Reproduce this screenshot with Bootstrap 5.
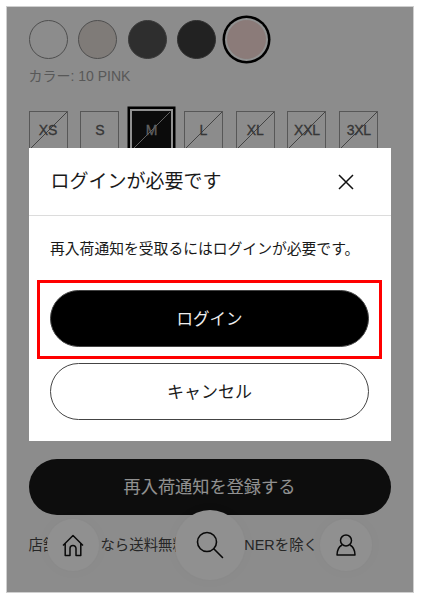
<!DOCTYPE html>
<html lang="ja">
	<head>
		<meta charset="UTF-8" />
		<meta name="viewport" content="width=device-width, initial-scale=1.0" />
		<title>ログインが必要です</title>
		<link
			href="https://cdn.jsdelivr.net/npm/bootstrap@5.3.3/dist/css/bootstrap.min.css"
			rel="stylesheet"
		/>
		<style>
			body {
				background: #fff;
				font-family: "Liberation Sans", "Noto Sans CJK JP", sans-serif;
				overflow: hidden;
			}
			.phone-frame {
				position: relative;
				width: 408px;
				height: 587px;
				margin: 6px 0 0 6px;
				padding: 13px 21.5px 0;
				border: 1px solid #cfcfcf;
				background: #f6f6f6;
				overflow: hidden;
			}
			.swatch-row {
				gap: 10.6px;
			}
			.swatch {
				width: 39px;
				height: 39px;
				flex: none;
				border-radius: 50%;
				border: 1px solid #8a8a8a;
			}
			.swatch-white { background: #f6f6f6; }
			.swatch-beige { background: #e0d8d3; }
			.swatch-gray { background: #525252; border-color: #666; }
			.swatch-dark { background: #3c3c3c; border-color: #555; }
			.swatch-pink {
				background: #f4d9d5;
				border-color: #f4d9d5;
				box-shadow: 0 0 0 2px #fff, 0 0 0 4.5px #000;
			}
			.color-label {
				margin-top: 7px;
				font-size: 14px;
				line-height: 20px;
				color: #9c9c9c;
			}
			.size-row {
				gap: 12.8px;
				margin-top: 25px;
			}
			.size-box {
				width: 39px;
				height: 39px;
				flex: none;
				border: 1px solid #999;
				font-size: 14px;
				line-height: 37px;
				letter-spacing: -0.2px;
				text-align: center;
				color: #606060;
				-webkit-text-stroke: 0.3px #606060;
			}
			.size-out {
				background: linear-gradient(
					to top left,
					transparent calc(50% - 0.7px),
					#777 50%,
					transparent calc(50% + 0.7px)
				);
			}
			.size-active {
				background: linear-gradient(
						to top left,
						transparent calc(50% - 0.7px),
						#aaa 50%,
						transparent calc(50% + 0.7px)
					),
					#151515;
				color: #aaa;
				-webkit-text-stroke: 0.3px #aaa;
				border-color: #151515;
				box-shadow: 0 0 0 2px #fff, 0 0 0 4.5px #000;
			}
			.notify-btn {
				width: 362px;
				height: 56px;
				margin-top: 309px;
				padding: 2px 0 0;
				background: #171717;
				color: #fff;
				font-size: 17.2px;
				border: 0;
			}
			.ship-note {
				margin-top: 20px;
				font-size: 14.4px;
				line-height: 20px;
				color: #444;
				white-space: nowrap;
			}
			.float-nav {
				position: absolute;
				left: 0;
				right: 0;
				top: 503px;
				height: 70px;
			}
			.nav-dot {
				position: absolute;
				border: 0;
				padding: 0;
				border-radius: 50%;
				background: #fdfdfd;
				box-shadow: 0 0 14px rgba(0, 0, 0, 0.03);
			}
			.nav-home { left: 40px; top: 9px; width: 52px; height: 52px; }
			.nav-search { left: 168px; top: 0; width: 70px; height: 70px; }
			.nav-user { left: 313px; top: 9px; width: 52px; height: 52px; }
			.dim-layer {
				position: absolute;
				inset: 0;
				background: rgba(0, 0, 0, 0.43);
			}
			.dialog-box {
				position: absolute;
				left: 21.5px;
				top: 141px;
				width: 362px;
				height: 293px;
				border: 0;
				border-radius: 0;
				background: #fff;
				color: #1a1a1a;
			}
			.dialog-head {
				height: 68px;
				padding: 0 37px 0 22px;
				border-bottom: 1px solid #dcdcdc;
			}
			.dialog-title {
				font-size: 19px;
				font-weight: 400;
				line-height: 1;
			}
			.close-x {
				border: 0;
				padding: 0;
				background: none;
				width: 16px;
				height: 16px;
				display: flex;
			}
			.dialog-main {
				padding: 23px 21.5px 0;
			}
			.dialog-text {
				font-size: 14.8px;
				line-height: 20px;
				margin: 0 0 31px;
				white-space: nowrap;
			}
			.login-wrap {
				position: relative;
				margin-bottom: 16px;
			}
			.red-mark {
				position: absolute;
				top: -10px;
				bottom: -12px;
				left: -13px;
				right: -13px;
				border: 3px solid #f00;
				pointer-events: none;
			}
			.pill-btn {
				display: block;
				width: 100%;
				height: 57px;
				padding: 2px 0 0;
				font-size: 16.5px;
				border: 1px solid #444;
			}
			.pill-login {
				background: #000;
				color: #eee;
			}
			.pill-cancel {
				background: #fff;
				color: #1a1a1a;
				font-size: 17px;
			}
		</style>
	</head>
	<body>
		<div class="phone-frame">
			<div class="d-flex swatch-row">
				<div class="swatch swatch-white"></div>
				<div class="swatch swatch-beige"></div>
				<div class="swatch swatch-gray"></div>
				<div class="swatch swatch-dark"></div>
				<div class="swatch swatch-pink"></div>
			</div>
			<div class="color-label">カラー: 10 PINK</div>

			<div class="d-flex size-row">
				<div class="size-box size-out">XS</div>
				<div class="size-box">S</div>
				<div class="size-box size-active">M</div>
				<div class="size-box size-out">L</div>
				<div class="size-box size-out">XL</div>
				<div class="size-box size-out">XXL</div>
				<div class="size-box size-out">3XL</div>
			</div>

			<button class="btn rounded-pill d-block notify-btn">再入荷通知を登録する</button>
			<div class="ship-note">店舗受取りなら送料無料（一部INNERを除く</div>

			<!-- floating nav -->
			<div class="float-nav">
				<button class="nav-dot nav-home d-flex align-items-center justify-content-center">
					<svg width="22" height="23" viewBox="0 0 22 23" fill="none" stroke="#111" stroke-width="1.5" stroke-linejoin="round">
						<path d="M1 11.5 11 1.5 21 11.5M3.2 9.5V21.5H8V14.5A3 3 0 0 1 14 14.5V21.5H18.8V9.5" />
					</svg>
				</button>
				<button class="nav-dot nav-search d-flex align-items-center justify-content-center">
					<svg width="28" height="28" viewBox="0 0 28 28" fill="none" stroke="#111" stroke-width="1.6" stroke-linecap="round">
						<circle cx="11" cy="11" r="9.5" />
						<path d="M18 18 26.5 26.5" />
					</svg>
				</button>
				<button class="nav-dot nav-user d-flex align-items-center justify-content-center">
					<svg width="20" height="22" viewBox="0 0 20 22" fill="none" stroke="#111" stroke-width="1.5" stroke-linejoin="round">
						<ellipse cx="10" cy="6.5" rx="5.5" ry="5.5" />
						<path d="M6 11C2.5 13 1 16 1 21H19C19 16 17.5 13 14 11" />
					</svg>
				</button>
			</div>

			<div class="dim-layer"></div>

			<!-- Dialog -->
			<div class="modal-content dialog-box">
				<div class="d-flex align-items-center justify-content-between dialog-head">
					<h5 class="m-0 dialog-title">ログインが必要です</h5>
					<button class="close-x" aria-label="閉じる">
						<svg width="16" height="16" viewBox="0 0 16 16" fill="none" stroke="#111" stroke-width="1.5">
							<path d="M1 1 15 15M15 1 1 15" />
						</svg>
					</button>
				</div>
				<div class="dialog-main">
					<p class="dialog-text">再入荷通知を受取るにはログインが必要です。</p>
					<div class="login-wrap">
						<button class="btn rounded-pill pill-btn pill-login">ログイン</button>
						<div class="red-mark"></div>
					</div>
					<button class="btn rounded-pill pill-btn pill-cancel">キャンセル</button>
				</div>
			</div>
		</div>
		<script src="https://cdn.jsdelivr.net/npm/bootstrap@5.3.3/dist/js/bootstrap.bundle.min.js"></script>
	</body>
</html>
